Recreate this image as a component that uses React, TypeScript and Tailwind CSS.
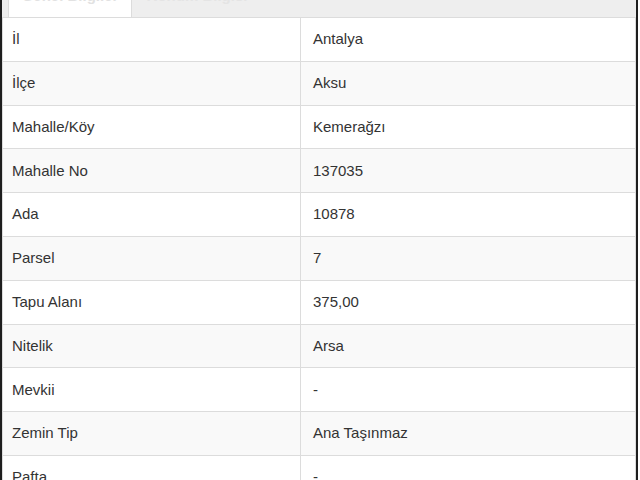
import React from "react";

const rows: [string, string][] = [
  ["İl", "Antalya"],
  ["İlçe", "Aksu"],
  ["Mahalle/Köy", "Kemerağzı"],
  ["Mahalle No", "137035"],
  ["Ada", "10878"],
  ["Parsel", "7"],
  ["Tapu Alanı", "375,00"],
  ["Nitelik", "Arsa"],
  ["Mevkii", "-"],
  ["Zemin Tip", "Ana Taşınmaz"],
  ["Pafta", "-"],
];

export default function App() {
  return (
    <div className="w-[640px] h-[480px] overflow-hidden bg-white flex font-['Liberation_Sans',Arial,sans-serif] text-[15px] text-[#333]">
      <div className="w-[2px] shrink-0 bg-[#1e1e1e]" />
      <div className="flex-1 flex flex-col min-w-0">
        <div className="h-[18px] shrink-0 bg-[#eeeeee] border-b border-[#dcdcdc] flex items-stretch overflow-hidden">
          <div className="ml-[6px] w-[124px] bg-white border-x border-[#dcdcdc] overflow-hidden flex justify-center">
            <span className="-mt-[15px] text-[15px] font-bold text-[#e2e2e2] whitespace-nowrap">Genel Bilgiler</span>
          </div>
          <div className="ml-[12px] w-[106px] overflow-hidden flex justify-center">
            <span className="-mt-[15px] text-[15px] font-bold text-[#e4e4e4] whitespace-nowrap">Konum Bilgisi</span>
          </div>
        </div>
        <div className="flex flex-col border-x border-[#dcdcdc]">
          {rows.map(([k, v], i) => (
            <div
              key={k}
              className={
                "h-[43.8px] shrink-0 flex border-b border-[#dcdcdc] " +
                (i % 2 === 1 ? "bg-[#f9f9f9]" : "bg-white")
              }
            >
              <div className="w-[298px] shrink-0 border-r border-[#dcdcdc] flex items-center pl-[9px]">
                {k}
              </div>
              <div className="flex-1 flex items-center pl-[12px]">{v}</div>
            </div>
          ))}
        </div>
      </div>
      <div className="w-[2px] shrink-0 bg-[#1e1e1e]" />
      <div className="w-[2px] shrink-0 bg-white" />
    </div>
  );
}
